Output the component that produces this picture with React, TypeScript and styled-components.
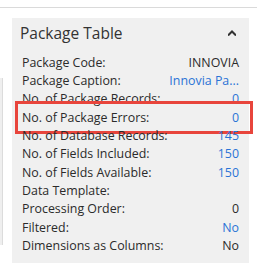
import React from "react";
import styled, { createGlobalStyle } from "styled-components";

const Global = createGlobalStyle`
  html, body { margin: 0; padding: 0; background: #ffffff; }
  body { font-family: "Segoe UI", "Open Sans", "Noto Sans", sans-serif; }
`;

const Page = styled.div`
  width: 257px;
  height: 273px;
  overflow: hidden;
  padding-top: 7px;
  box-sizing: border-box;
`;

const TopRule = styled.div`
  height: 1px;
  background: #dadada;
`;

const Body = styled.div`
  display: flex;
  padding-top: 10px;
`;

const SideStrip = styled.div`
  width: 2px;
  height: 167px;
  margin-top: 60px;
  background: #efefef;
  border-right: 1px solid #dcdcdc;
`;

const Panel = styled.section`
  margin-left: 9px;
  width: 237px;
  height: 245px;
  background: #f0f0f0;
  box-sizing: border-box;
  padding: 0 10px;
`;

const Header = styled.div`
  display: flex;
  align-items: center;
  justify-content: space-between;
  height: 34px;
  padding-bottom: 5px;
  box-sizing: border-box;
`;

const Title = styled.h2`
  margin: 0 0 0 -2px;
  font-size: 15.5px;
  font-weight: 400;
  color: #333333;
`;

const Chevron = styled.svg`
  width: 8px;
  height: 6px;
  margin-right: 3px;
`;

const Rows = styled.div`
  display: flex;
  flex-direction: column;
  padding-top: 1px;
`;

const Row = styled.div`
  position: relative;
  display: flex;
  justify-content: space-between;
  align-items: center;
  height: 18.35px;
  font-size: 12.4px;
  color: #2b2b2b;
  white-space: nowrap;
`;

const Label = styled.span``;

const Value = styled.span<{ $link?: boolean }>`
  color: ${(p) => (p.$link ? "#2a73d6" : "#2b2b2b")};
`;

const Highlight = styled.div`
  position: absolute;
  left: -7px;
  right: -14px;
  top: -7px;
  bottom: -8px;
  border: 3px solid #e8453c;
  pointer-events: none;
`;

type Item = { label: string; value: string; link?: boolean; highlight?: boolean };

const items: Item[] = [
  { label: "Package Code:", value: "INNOVIA" },
  { label: "Package Caption:", value: "Innovia Pa...", link: true },
  { label: "No. of Package Records:", value: "0", link: true },
  { label: "No. of Package Errors:", value: "0", link: true, highlight: true },
  { label: "No. of Database Records:", value: "145", link: true },
  { label: "No. of Fields Included:", value: "150", link: true },
  { label: "No. of Fields Available:", value: "150", link: true },
  { label: "Data Template:", value: "" },
  { label: "Processing Order:", value: "0" },
  { label: "Filtered:", value: "No", link: true },
  { label: "Dimensions as Columns:", value: "No" },
];

export default function App() {
  return (
    <Page>
      <Global />
      <TopRule />
      <Body>
        <SideStrip />
        <Panel>
          <Header>
            <Title>Package Table</Title>
            <Chevron viewBox="0 0 8 6">
              <path d="M0 5.5 L4 1.5 L8 5.5" fill="none" stroke="#333" strokeWidth="2" />
            </Chevron>
          </Header>
          <Rows>
            {items.map((it) => (
              <Row key={it.label}>
                <Label>{it.label}</Label>
                <Value $link={it.link}>{it.value}</Value>
                {it.highlight && <Highlight />}
              </Row>
            ))}
          </Rows>
        </Panel>
      </Body>
    </Page>
  );
}
